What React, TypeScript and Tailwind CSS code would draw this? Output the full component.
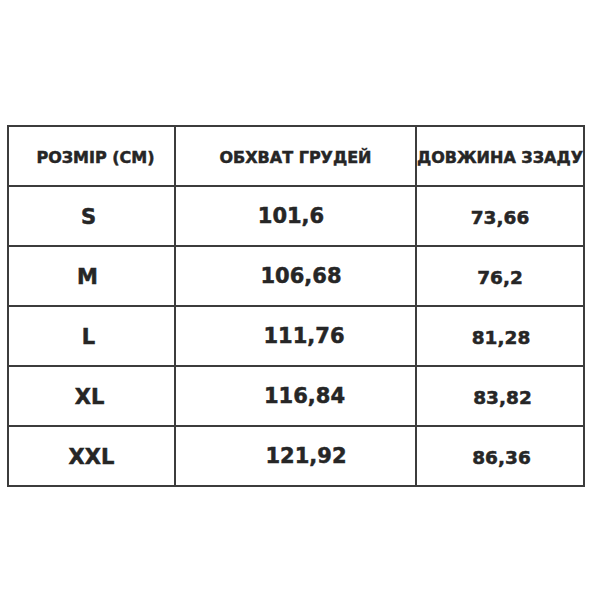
import React from "react";

const rows = [
  { size: "S", chest: "101,6", back: "73,66", sc: "pr-[6px]", cc: "pr-[9px]", bc: "" },
  { size: "M", chest: "106,68", back: "76,2", sc: "pr-[8px]", cc: "pl-[11px]", bc: "" },
  { size: "L", chest: "111,76", back: "81,28", sc: "pr-[6px]", cc: "pl-[17px]", bc: "pl-[2px]" },
  { size: "XL", chest: "116,84", back: "83,82", sc: "pr-[4px]", cc: "pl-[18px]", bc: "pl-[5px]" },
  { size: "XXL", chest: "121,92", back: "86,36", sc: "", cc: "pl-[21px]", bc: "pl-[3px]" },
];

export default function App() {
  return (
    <div
      className="w-[600px] h-[600px] bg-white pt-[125px] pl-[7px] text-[#262626]"
      style={{ fontFamily: '"DejaVu Sans", "Liberation Sans", sans-serif' }}
    >
      <div className="grid grid-cols-[167px_241px_168px] w-[578px] border-t-2 border-l-2 border-[#3c3c3c] font-bold [-webkit-text-stroke:0.5px_#262626]">
        <div className="h-[60px] border-r-2 border-b-2 border-[#3c3c3c] flex items-center justify-center pl-[8px] pt-[3px] text-[16px] whitespace-nowrap">
          РОЗМІР (СМ)
        </div>
        <div className="h-[60px] border-r-2 border-b-2 border-[#3c3c3c] flex items-center justify-center pt-[3px] text-[16px] whitespace-nowrap">
          ОБХВАТ ГРУДЕЙ
        </div>
        <div className="h-[60px] border-r-2 border-b-2 border-[#3c3c3c] flex items-center justify-center pt-[3px] text-[16px] whitespace-nowrap">
          ДОВЖИНА ЗЗАДУ
        </div>
        {rows.map((r) => (
          <React.Fragment key={r.size}>
            <div className={`h-[60px] border-r-2 border-b-2 border-[#3c3c3c] flex items-center justify-center pt-[3px] text-[21px] ${r.sc}`}>
              {r.size}
            </div>
            <div className={`h-[60px] border-r-2 border-b-2 border-[#3c3c3c] flex items-center justify-center pt-[2px] text-[21px] ${r.cc}`}>
              {r.chest}
            </div>
            <div className={`h-[60px] border-r-2 border-b-2 border-[#3c3c3c] flex items-center justify-center pt-[3px] text-[18.5px] ${r.bc}`}>
              {r.back}
            </div>
          </React.Fragment>
        ))}
      </div>
    </div>
  );
}
